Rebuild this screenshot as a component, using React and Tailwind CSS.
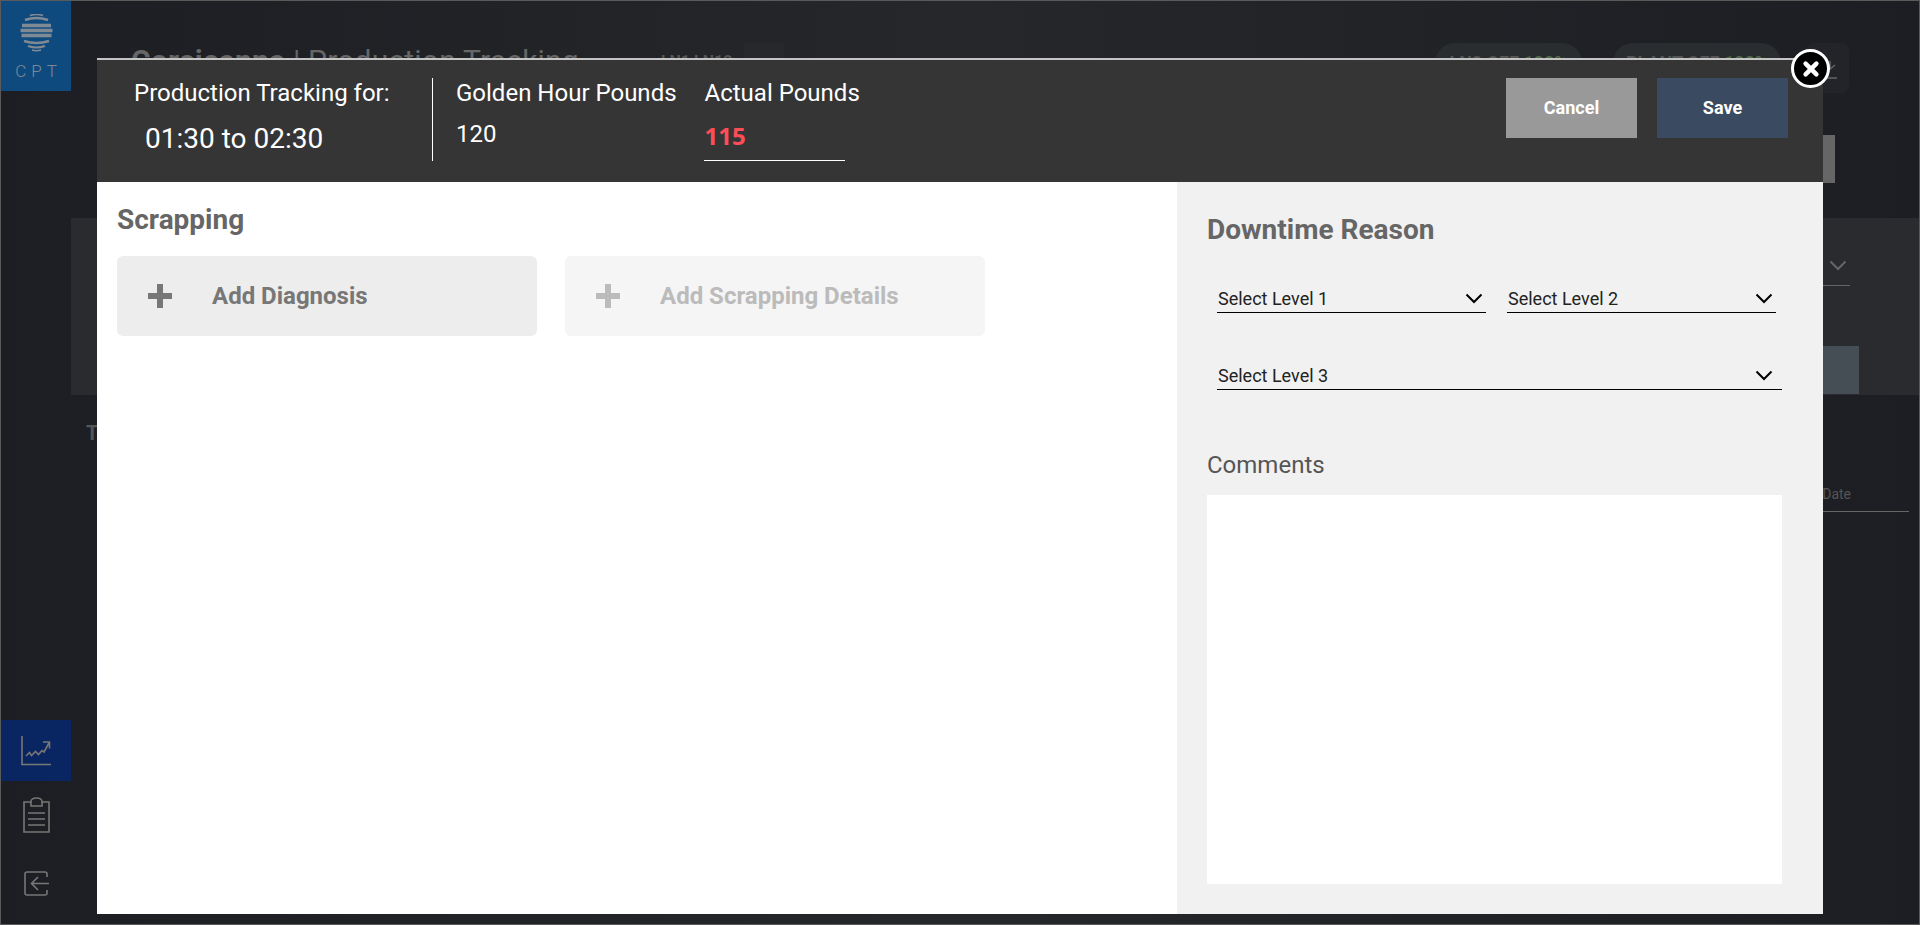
import React from "react";

const Chevron = ({ className = "" }) => (
  <svg viewBox="0 0 18 11" className={`w-[18px] h-[11px] ${className}`} fill="none" stroke="currentColor" strokeWidth="2">
    <path d="M1.5 1.5 9 9l7.5-7.5" />
  </svg>
);

const Select = ({ label, className = "" }) => (
  <div className={`flex items-center justify-between border-b border-black h-[26px] pl-[1px] pb-[2px] ${className}`}>
    <span className="text-[18px] leading-[24px] text-[#222]">{label}</span>
    <Chevron className="text-black" />
  </div>
);

const Plus = ({ className }) => (
  <svg viewBox="0 0 24 24" className={`w-6 h-6 ${className}`} fill="currentColor">
    <path d="M9 0h6v9h9v6h-9v9H9v-9H0V9h9z" />
  </svg>
);

export default function App() {
  return (
    <div className="relative w-[1920px] h-[925px] overflow-hidden border border-[#5a5a5a] flex bg-gradient-to-r from-[#1c1e23] via-[#26272a] to-[#1d1e23] font-['Roboto',sans-serif]">
      {/* dimmed sidebar */}
      <aside className="w-[70px] shrink-0 flex flex-col">
        <div className="h-[90px] bg-[#0f4a7f] flex flex-col items-center pt-[13px]">
          <svg viewBox="0 0 33 38" className="w-[33px] h-[38px]" fill="none" stroke="#7f8a94">
            <path d="M10 1.500q6.500-2 13 0" strokeWidth="1.600" />
            <path d="M5 6q11.500-4 23 0" strokeWidth="2.600" />
            <path d="M2 11.500h29" strokeWidth="3.600" />
            <path d="M0.500 16.500h32" strokeWidth="3.600" />
            <path d="M1.500 21.500h30" strokeWidth="3.600" />
            <path d="M4 27q12.500 4 25 0" strokeWidth="2.600" />
            <path d="M8 32q8.500 3 17 0" strokeWidth="2" />
            <path d="M12 36q4.500 1.500 9 0" strokeWidth="1.400" />
          </svg>
          <div className="mt-[10px] text-[17px] leading-[18px] font-light tracking-[5px] pl-[5px] text-[#7d8a96]">CPT</div>
        </div>
        <div className="mt-auto mb-[28px] flex flex-col items-center text-[#777]">
          <div className="w-full h-[61px] bg-[#0a2662] flex items-center justify-center">
            <svg viewBox="0 0 30 30" className="w-[30px] h-[30px]" fill="none" stroke="currentColor" strokeWidth="1.600">
              <path d="M1 0v28.500h29" />
              <path d="M5 20l3.500-3.500 2 3 4-4 3 3 3.500-4 2 1.500 5-9" />
              <path d="M22 6h6.500v6.500" />
            </svg>
          </div>
          <svg viewBox="0 0 27 36" className="mt-[16px] w-[27px] h-9" fill="none" stroke="currentColor" strokeWidth="1.600">
            <path d="M8 5H1v30h25V5h-7" />
            <path d="M8 9V4.500a5.500 3.500 0 0 1 11 0V9z" />
            <path d="M5 16h17M5 22h17M5 28h17" />
          </svg>
          <svg viewBox="0 0 25 25" className="mt-[38px] w-[25px] h-[25px]" fill="none" stroke="currentColor" strokeWidth="1.600">
            <path d="M23 6V3a2 2 0 0 0-2-2H3a2 2 0 0 0-2 2v19a2 2 0 0 0 2 2h18a2 2 0 0 0 2-2v-3" />
            <path d="M25 12.500H8M14 6l-6.500 6.500L14 19" />
          </svg>
        </div>
      </aside>

      {/* dimmed page */}
      <main className="relative flex-1 min-w-0 flex flex-col">
        <header className="h-[217px] shrink-0 pl-[60px] pt-[42px] flex items-start text-[#666]">
          <h1 className="text-[30px] leading-[36px] tracking-[0.2px] whitespace-nowrap">
            <b>Corsicanna</b> | Production Tracking
          </h1>
          <span className="ml-[82px] mt-[9px] text-[16px] leading-[20px] font-bold text-[#555] whitespace-nowrap">LN1 LN12</span>
          <div className="ml-[12px] w-[40px] h-[20px] bg-[#27282b]" />
          <div className="ml-auto flex gap-[31px]">
            <div className="h-[50px] w-[147px] rounded-[20px] bg-[#2a2d2f] pt-[9px] text-center text-[18px] leading-[21px] font-bold text-[#555]">LN2 OFF <span className="text-[#4e6b47]">100%</span></div>
            <div className="h-[50px] w-[168px] rounded-[20px] bg-[#2a2d2f] pt-[9px] text-center text-[18px] leading-[21px] font-bold text-[#555]">PLANT OFF <span className="text-[#4e6b47]">100%</span></div>
          </div>
          <div className="ml-[26px] mr-[70px] w-[42px] h-[50px] rounded-[8px] bg-[#232429] flex items-center justify-end pr-[12px]">
            <svg viewBox="0 0 10 24" className="w-[10px] h-6 mt-[10px]" fill="none" stroke="#666" strokeWidth="1.500">
              <path d="M3 0v8M2 9l6-5M0 17h10" />
            </svg>
          </div>
        </header>
        <section className="h-[177px] shrink-0 bg-[#2a2b2f] flex flex-col items-end pr-[60px]">
          <div className="mt-[17px] mr-[9px] w-[60px] h-[51px] border-b border-[#666] flex justify-end items-end pb-[14px] pr-[3px] text-[#666]">
            <Chevron />
          </div>
          <div className="mt-auto mb-[1px] w-[60px] h-[48px] bg-[#454d55]" />
        </section>
        <div className="flex justify-between items-end h-[117px] pr-[10px] text-[#555]">
          <span className="ml-[15px] mb-[64px] text-[20px] font-bold">T</span>
          <div className="w-[90px] border-b border-[#666] pb-[6px] text-right pr-[58px] text-[14px]">Date</div>
        </div>
      </main>

      {/* modal */}
      <div className="absolute left-[96px] top-[57px] w-[1726px] h-[856px] flex flex-col">
        <div className="h-[124px] shrink-0 bg-[#353535] border-t-2 border-[#c4c4c4] flex items-start pt-[18px] pl-[37px] text-white">
          <div className="w-[299px] border-r border-white h-[83px] pt-[1px]">
            <div className="text-[24px] leading-[28px]">Production Tracking for:</div>
            <div className="mt-[14px] ml-[11px] text-[28px] leading-[36px]">01:30 to 02:30</div>
          </div>
          <div className="ml-[23px] pt-[1px]">
            <div className="text-[24px] leading-[28px]">Golden Hour Pounds</div>
            <div className="mt-[13px] text-[24px] leading-[28px]">120</div>
          </div>
          <div className="ml-[28px] pt-[1px]">
            <div className="text-[24px] leading-[28px]">Actual Pounds</div>
            <div className="mt-[9px] -ml-[1px] w-[141px] h-[45px] border-b border-white pl-[1px] text-[24px] leading-[28px] font-bold text-[#ff4d57] font-['Open_Sans',sans-serif] pt-[6px]">115</div>
          </div>
          <div className="ml-auto mr-[35px] flex gap-5">
            <button className="w-[131px] h-[60px] pb-[2px] bg-[#999] text-white text-[18px] font-bold">Cancel</button>
            <button className="w-[131px] h-[60px] pb-[2px] bg-[#3a4a60] text-white text-[18px] font-bold">Save</button>
          </div>
        </div>
        <div className="flex-1 min-h-0 flex bg-white">
          <div className="flex-1 pl-[20px] pt-[21px]">
            <h2 className="text-[28px] leading-[34px] font-bold text-[#666]">Scrapping</h2>
            <div className="mt-[19px] flex gap-[28px]">
              <div className="w-[420px] h-[80px] rounded-[6px] bg-[#ededed] flex items-center pl-[31px] text-[#777]">
                <Plus />
                <span className="ml-[40px] text-[24px] font-bold">Add Diagnosis</span>
              </div>
              <div className="w-[420px] h-[80px] rounded-[6px] bg-[#f5f5f5] flex items-center pl-[31px] text-[#bbb]">
                <Plus />
                <span className="ml-[40px] text-[24px] font-bold">Add Scrapping Details</span>
              </div>
            </div>
          </div>
          <div className="w-[646px] shrink-0 bg-[#f1f1f1] pl-[30px] pr-[41px] pt-[31px]">
            <h2 className="text-[28px] leading-[34px] font-bold text-[#666]">Downtime Reason</h2>
            <div className="mt-[40px] ml-[10px] flex gap-[21px] pr-[6px]">
              <Select label="Select Level 1" className="flex-1 pr-[3px]" />
              <Select label="Select Level 2" className="flex-1 pr-[3px]" />
            </div>
            <Select label="Select Level 3" className="mt-[51px] ml-[10px] pr-[9px]" />
            <div className="mt-[60px] text-[24px] leading-[30px] text-[#555]">Comments</div>
            <div className="mt-[15px] h-[389px] bg-white" />
          </div>
        </div>
      </div>

      {/* close */}
      <div className="absolute left-[1790px] top-[48px] w-[39px] h-[39px] rounded-full bg-black border-[3px] border-white flex items-center justify-center">
        <svg viewBox="0 0 20 20" className="w-[18px] h-[18px]" stroke="white" strokeWidth="5" strokeLinecap="round">
          <path d="M4 4l12 12M16 4 4 16" />
        </svg>
      </div>
      <div className="absolute left-[1822px] top-[134px] w-[12px] h-[48px] bg-[#666]" />
    </div>
  );
}
